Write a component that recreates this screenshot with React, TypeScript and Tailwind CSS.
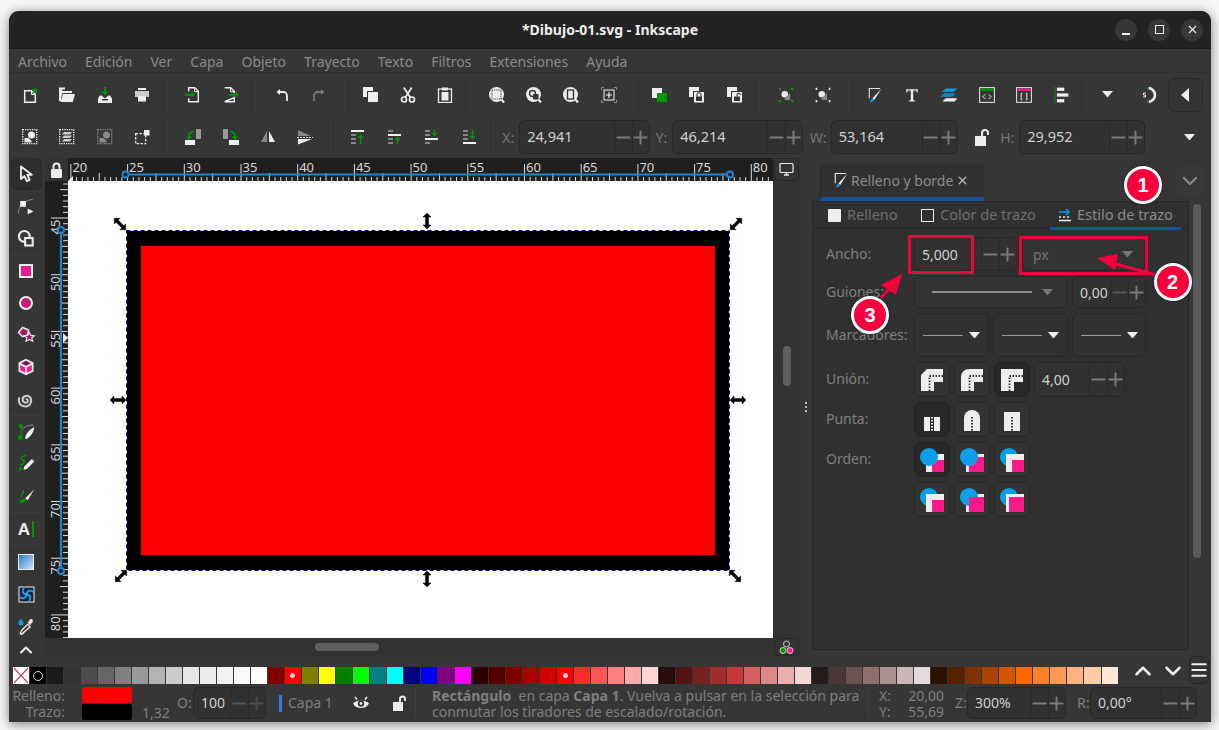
import type { ReactNode } from 'react';
import { ChevronDown, ChevronUp, Minus, Plus, Menu, X } from 'lucide-react';

const W = '#eeeeee';
const G = '#009a00';
const D = '#363636';
const P = '#ff1a8c';
const B = '#0c9ee8';

function I16({ children }: { children: ReactNode }) {
  return (
    <svg width="16" height="16" viewBox="0 0 16 16" fill="none">
      {children}
    </svg>
  );
}

function Svg({ children, size = 18 }: { children: ReactNode; size?: number }) {
  return (
    <svg width={size} height={size} viewBox="0 0 22 22" fill="none">
      {children}
    </svg>
  );
}

function Magnifier({ children }: { children?: ReactNode }) {
  return (
    <I16>
      <circle cx="7.500" cy="7.500" r="7.500" fill={W} />
      <path d="M12 12l3 3.500" stroke={W} strokeWidth="2.200" />
      {children}
    </I16>
  );
}

function LockSquares({ open }: { open?: boolean }) {
  return (
    <I16>
      <rect x="0" y="0" width="10" height="10" fill={W} />
      <rect x="4.500" y="4.500" width="11" height="11.500" fill={W} stroke={D} strokeWidth="1" />
      <rect x="7" y="9.500" width="6" height="4.500" fill={D} />
      <path d={open ? 'M10 9.500V7.800a1.800 1.800 0 0 1 3.500 0' : 'M8 9.500V7.800a2 2 0 0 1 4 0v1.700'} stroke={D} strokeWidth="1.100" />
    </I16>
  );
}

function Dotted({ color = W, children }: { color?: string; children?: ReactNode }) {
  return (
    <I16>
      <rect x="0.700" y="0.700" width="14" height="14" stroke={color} strokeWidth="1.300" strokeDasharray="1.300 1" />
      {children}
    </I16>
  );
}

const row1: ReactNode[][] = [
  [
    <I16 key="new">
      <path d="M2.700 3.700h6.800l3.800 3.800v7.800H2.700z" stroke={W} strokeWidth="1.500" fill={D} />
      <path d="M9.500 3.500v4h4" stroke={W} strokeWidth="1" />
      <path d="M13 0l1 2.200 2.400.3-1.800 1.600.5 2.400-2.100-1.200-2.100 1.200.5-2.400-1.800-1.600 2.400-.3z" fill={G} />
    </I16>,
    <I16 key="open">
      <path d="M0 .5h6v2H3.200V4H13v2H3.500L2 11.500V14H0z" fill={W} />
      <path d="M4 7h12l-2.300 8H1.500z" fill={W} />
    </I16>,
    <I16 key="save">
      <path d="M8 0v6" stroke={G} strokeWidth="2" />
      <path d="M4.500 4.500h7L8 8.500z" fill={G} />
      <path d="M3 8.500h1.500L8 11.500l3.500-3H13l2 3V16H1v-4.500z" fill={W} />
      <rect x="5" y="12" width="6" height="1.400" fill={D} />
    </I16>,
    <I16 key="print">
      <rect x="4" y="1" width="8" height="2" fill={W} />
      <rect x="1" y="4" width="14" height="6" fill="#cccccc" />
      <rect x="4" y="9" width="8" height="5.500" fill={W} />
    </I16>,
  ],
  [
    <I16 key="imp">
      <path d="M3.700 4.500V.7h6l3.600 3.600v10.400H3.700v-3.500" stroke={W} strokeWidth="1.400" />
      <path d="M9.500.7v4h4" stroke={W} strokeWidth="1" />
      <path d="M0 7.700h7" stroke={G} strokeWidth="2" />
      <path d="M6.500 4.500l3.500 3.200-3.500 3.200z" fill={G} />
    </I16>,
    <I16 key="exp">
      <path d="M1.700.7h6l3.600 3.600v2M11.300 10.500v4.200H1.700z" stroke={W} strokeWidth="1.400" />
      <path d="M7.500.7v4h4" stroke={W} strokeWidth="1" />
      <path d="M6 7.700h7" stroke={G} strokeWidth="2" />
      <path d="M12.500 4.500l3.500 3.200-3.500 3.200z" fill={G} />
    </I16>,
  ],
  [
    <I16 key="undo">
      <path d="M6 2L2.500 5 6 8z" fill={W} />
      <path d="M4 5h5.500a3.500 3.500 0 0 1 3.500 3.500V14" stroke={W} strokeWidth="1.800" />
    </I16>,
    <I16 key="redo">
      <path d="M10 2l3.500 3L10 8z" fill="#777777" />
      <path d="M12 5H6.500A3.500 3.500 0 0 0 3 8.500V14" stroke="#777777" strokeWidth="1.800" />
    </I16>,
  ],
  [
    <I16 key="dup">
      <rect x="0" y="0" width="10" height="10" fill={W} />
      <rect x="4.500" y="4.500" width="11" height="11" fill={W} stroke={D} strokeWidth="1" />
    </I16>,
    <I16 key="cut">
      <path d="M3.800 .5l6.500 10M11.700 .5L5.200 10.500" stroke={W} strokeWidth="1.700" />
      <circle cx="4" cy="12.500" r="2.500" stroke={W} strokeWidth="1.700" />
      <circle cx="12" cy="12.500" r="2.500" stroke={W} strokeWidth="1.700" />
    </I16>,
    <I16 key="paste">
      <rect x="1.500" y="2" width="13" height="13.500" stroke={W} strokeWidth="1.300" />
      <rect x="5" y="0.500" width="6" height="3" fill={W} />
      <rect x="4.500" y="5" width="7" height="8.500" fill={W} />
    </I16>,
  ],
  [
    <Magnifier key="z1">
      <rect x="3" y="3" width="9" height="9" stroke={D} strokeWidth="1.200" strokeDasharray="1 .9" />
    </Magnifier>,
    <Magnifier key="z2">
      <circle cx="6.500" cy="6.500" r="3" stroke={D} strokeWidth="1.400" />
      <rect x="7" y="7" width="5.500" height="5.500" fill={D} />
    </Magnifier>,
    <Magnifier key="z3">
      <rect x="4.500" y="3" width="6" height="9" stroke={D} strokeWidth="1.400" />
    </Magnifier>,
    <I16 key="z4">
      <path d="M.5 3V.5H3M13 .5h2.500V3M15.500 13v2.500H13M3 15.500H.5V13" stroke="#8a8a8a" strokeWidth="1" />
      <rect x="3" y="3" width="10" height="10" stroke={W} strokeWidth="1" />
      <path d="M8 5v6M5 8h6" stroke={W} strokeWidth="1.200" />
    </I16>,
  ],
  [
    <I16 key="g">
      <rect x="0" y="1" width="10" height="10" fill={W} />
      <rect x="5" y="6" width="10" height="9" fill={G} />
    </I16>,
    <LockSquares key="l1" />,
    <LockSquares key="l2" open />,
  ],
  [
    <Svg key="s1">
      <path d="M2 2h3v3H2zM17 2h3v3h-3zM2 17h3v3H2zM17 17h3v3h-3z" fill={G} />
      <circle cx="9.500" cy="10" r="4" fill={W} />
      <path d="M11 13l5-4v8H9z" fill="#888" />
    </Svg>,
    <Svg key="s2">
      <path d="M2 2h2v3H2zM18 2h2v3h-2zM2 17h2v3H2zM18 17h2v3h-2z" fill={W} />
      <circle cx="9.500" cy="10" r="4" fill={W} />
      <path d="M11 13l5-4v8H9z" fill="#888" />
    </Svg>,
  ],
  [
    <Svg key="fs">
      <path d="M17 3H4v12" stroke={W} strokeWidth="1.300" />
      <path d="M19 3L8 15l2 2z" fill={W} />
      <path d="M8 15c-2 1-2 3-4 5 3 0 5-1 6-3z" fill={B} />
    </Svg>,
    <Svg key="t">
      <path d="M4 4h14v4h-1l-1-2.500h-3.500V17l2 1v1H7.500v-1l2-1V5.500H6L5 8H4z" fill={W} />
    </Svg>,
    <Svg key="lay">
      <path d="M7 3h14l-4 4H2z" fill={B} />
      <path d="M5 9h14l-4 4H1z" fill={B} opacity="0.8" />
      <path d="M7 15h14l-3 4H3z" fill={W} />
    </Svg>,
    <Svg key="xml">
      <rect x="2" y="2" width="18" height="18" stroke={W} strokeWidth="1.200" />
      <rect x="3" y="3" width="16" height="3" fill={G} />
      <path d="M9 10l-3 3 3 3M13 10l3 3-3 3" stroke={W} strokeWidth="1.200" />
    </Svg>,
    <Svg key="css">
      <rect x="2" y="2" width="18" height="18" stroke={W} strokeWidth="1.200" />
      <rect x="3" y="3" width="16" height="3" fill={P} />
      <path d="M9 9H7.500v8H9M13 9h1.500v8H13" stroke={W} strokeWidth="1.200" />
    </Svg>,
    <Svg key="align">
      <path d="M3.500 1v20" stroke={G} strokeWidth="1.200" />
      <rect x="6" y="2" width="9" height="4" fill={W} />
      <rect x="6" y="9" width="14" height="4" fill={W} />
      <rect x="6" y="16" width="9" height="4" fill={W} />
    </Svg>,
  ],
];

function Flip({ mirror }: { mirror?: boolean }) {
  return (
    <I16>
      <g transform={mirror ? 'matrix(-1 0 0 1 16 0)' : undefined}>
        <rect x="11" y="0" width="5" height="10" fill="#999999" />
        <rect x="0" y="11" width="10" height="5" fill={W} />
        <path d="M9 2.500a5 5 0 0 0-5 5v1" stroke={G} strokeWidth="1.700" />
        <path d="M1 7.500h6l-3 3.500z" fill={G} />
      </g>
    </I16>
  );
}

function AlignBars({ white, gray, arrow }: { white: number; gray: number[]; arrow: ReactNode }) {
  return (
    <I16>
      <rect x="2" y={white} width="13" height="2" fill={W} />
      {gray.map((y) => (
        <rect key={y} x="2" y={y} width="5" height="2" fill="#888888" />
      ))}
      {arrow}
    </I16>
  );
}

const row2: ReactNode[][] = [
  [
    <Dotted key="a1">
      <circle cx="9.500" cy="6" r="3.500" fill={W} />
      <path d="M2.500 9h4l3 3v1.500h-7z" fill={W} />
    </Dotted>,
    <Dotted key="a2">
      <path d="M5 3h8l-2 2.500H3zM5 6.500h8L11 9H3zM5 10h8l-2 2.500H3z" fill="#cccccc" />
    </Dotted>,
    <Dotted key="a3" color="#8a8a8a">
      <circle cx="9.500" cy="6" r="3.500" fill="#8a8a8a" />
      <path d="M2.500 9h4l3 3v1.500h-7z" fill="#8a8a8a" />
    </Dotted>,
    <I16 key="a4">
      <rect x="1.700" y="4.700" width="10" height="10" stroke={W} strokeWidth="1.300" strokeDasharray="2.400 1.400" />
      <rect x="10" y="1" width="5.500" height="5.500" fill={W} />
    </I16>,
  ],
  [
    <Flip key="f1" />,
    <Flip key="f2" mirror />,
    <I16 key="f3">
      <path d="M7 2v11H1z" fill="#888888" />
      <path d="M9 2v11h6z" fill={W} />
    </I16>,
    <I16 key="f4">
      <path d="M1 1l13 6H1z" fill="#888888" />
      <path d="M0 8.500h16" stroke={W} strokeDasharray="2 1" />
      <path d="M1 10h14L1 15.500z" fill={W} />
    </I16>,
  ],
  [
    <AlignBars
      key="v1"
      white={1}
      gray={[5, 9, 13]}
      arrow={
        <>
          <path d="M11.500 15.500V7" stroke={G} strokeWidth="1.600" />
          <path d="M8.500 8.500l3-3.500 3 3.500z" fill={G} />
        </>
      }
    />,
    <AlignBars
      key="v2"
      white={5}
      gray={[1, 9, 13]}
      arrow={
        <>
          <path d="M11.500 15.500V10" stroke={G} strokeWidth="1.600" />
          <path d="M8.500 11l3-3.500 3 3.500z" fill={G} />
        </>
      }
    />,
    <AlignBars
      key="v3"
      white={9}
      gray={[1, 5, 13]}
      arrow={
        <>
          <path d="M11.500 .5V5" stroke={G} strokeWidth="1.600" />
          <path d="M8.500 4l3 3.500 3-3.500z" fill={G} />
        </>
      }
    />,
    <AlignBars
      key="v4"
      white={13}
      gray={[1, 5, 9]}
      arrow={
        <>
          <path d="M11.500 .5V8" stroke={G} strokeWidth="1.600" />
          <path d="M8.500 7l3 3.500 3-3.500z" fill={G} />
        </>
      }
    />,
  ],
];

function ToolBtn({ children }: { children: ReactNode }) {
  return <div className="flex h-[32px] w-[37.33px] shrink-0 items-center justify-center">{children}</div>;
}

function Groups({ groups }: { groups: ReactNode[][] }) {
  return (
    <>
      {groups.map((g, i) => (
        <div key={i} className={`relative flex h-full items-center ${i < groups.length - 1 ? 'mr-[14px]' : ''}`}>
          {g.map((n, j) => (
            <ToolBtn key={j}>{n}</ToolBtn>
          ))}
          <div className="absolute -right-[7px] top-[4px] bottom-[4px] w-px bg-[#3d3d3d]" />
        </div>
      ))}
    </>
  );
}

function Spin({
  value,
  dimMinus,
  dimPlus,
  big,
  className,
}: {
  value: string;
  dimMinus?: boolean;
  dimPlus?: boolean;
  big?: boolean;
  className: string;
}) {
  return (
    <div className={`flex items-stretch rounded-[6px] border border-[#272727] bg-[#313131] ${className}`}>
      <div className={`min-w-0 flex-1 self-center pl-[7px] text-[#d0d0d0] ${big ? 'text-[14.500px]' : 'text-[14px]'}`}>{value}</div>
      <div className="flex w-[17.500px] items-center justify-center border-l border-[#2a2a2a] text-[#7c7c7c]">
        <Minus size={21} strokeWidth={2.200} className={`shrink-0 ${dimMinus ? 'text-[#565656]' : ''}`} />
      </div>
      <div className="flex w-[17.500px] items-center justify-center border-l border-[#2a2a2a] text-[#7c7c7c]">
        <Plus size={21} strokeWidth={2.200} className={`shrink-0 ${dimPlus ? 'text-[#4e4e4e]' : ''}`} />
      </div>
    </div>
  );
}

function Caret({ color = '#eeeeee', w = 11 }: { color?: string; w?: number }) {
  return (
    <svg width={w} height={w * 0.6} viewBox="0 0 14 8.400" preserveAspectRatio="none">
      <path d="M0 0h14L7 8.400z" fill={color} />
    </svg>
  );
}

function Coord({ label, value, w, lw }: { label: string; value: string; w: string; lw: string }) {
  return (
    <>
      <div className={`${lw} text-right text-[14px] text-[#757575]`}>{label}</div>
      <Spin value={value} big className={`ml-[5px] h-[34px] ${w}`} />
    </>
  );
}

const tools: ReactNode[][] = [
  [
    <svg key="sel" width="20" height="20" viewBox="0 0 24 24">
      <path d="M6 3v15l4-3.500 3 6 3.500-1.800-3-5.700H19z" fill="#2e2e2e" stroke={W} strokeWidth="2.200" strokeLinejoin="round" />
    </svg>,
    <svg key="node" width="20" height="20" viewBox="0 0 24 24" fill="none">
      <path d="M3 21c0-8 4-15 17-17" stroke="#999999" strokeWidth="1" />
      <rect x="5" y="6" width="7" height="7" fill={W} />
      <path d="M14 15l7 3.500-7 3.500z" fill={W} />
    </svg>,
    <svg key="tw" width="20" height="20" viewBox="0 0 24 24" fill="none">
      <circle cx="10" cy="10" r="6.500" stroke={W} strokeWidth="2.500" />
      <rect x="11" y="12" width="9" height="9" fill="#363636" stroke={W} strokeWidth="2.500" />
    </svg>,
  ],
  [
    <div key="r" className="h-[14px] w-[14px] border-[2px] border-[#eeeeee] bg-[#ec1a8c]" />,
    <div key="c" className="h-[14px] w-[14px] rounded-full border-[2px] border-[#eeeeee] bg-[#c41f77]" />,
    <svg key="st" width="20" height="20" viewBox="0 0 24 24">
      <path d="M8 3l7 3-1 6-6 2-5-5z" fill="#a01d66" stroke={W} strokeWidth="1.800" />
      <path d="M16 9l2 3.500 4 .5-3 2.500 1 4-4-2-4 2 1-4-3-2.500 4-.5z" fill="#a01d66" stroke={W} strokeWidth="1.400" />
    </svg>,
    <svg key="box" width="20" height="20" viewBox="0 0 24 24">
      <path d="M12 2l9 4.500v11L12 22l-9-4.500v-11z" fill={W} />
      <path d="M12 4.500l6 3-6 3-6-3z" fill="#7a1a55" />
      <path d="M5 9.500l6 3V19l-6-3z" fill={P} />
      <path d="M19 9.500l-6 3V19l6-3z" fill={P} />
    </svg>,
    <svg key="sp" width="20" height="20" viewBox="0 0 24 24" fill="none">
      <path d="M12 13c1-1.500 3 0 2 2-1.500 2.500-6 1.500-6-2.500 0-4 6-6 9-2.500 3 4 0 11-5.500 11C5 21 2 16 4 10" stroke="#cccccc" strokeWidth="2.400" />
    </svg>,
  ],
  [
    <svg key="pen" width="20" height="20" viewBox="0 0 24 24" fill="none">
      <path d="M6 7c1 5 0 7 0 9" stroke={G} strokeWidth="1.500" />
      <circle cx="6" cy="5" r="2.500" fill={G} />
      <rect x="3" y="16" width="5" height="5" fill={G} />
      <path d="M11 19c1-5 4-9 11-13-1 7-4 11-10 15z" fill={W} />
      <path d="M8 9c3-4 8-6 13-5" stroke="#999999" strokeWidth="1" />
    </svg>,
    <svg key="pc" width="20" height="20" viewBox="0 0 24 24" fill="none">
      <path d="M12 2c-6 0-7 4-4 5s3 5-3 6" stroke={G} strokeWidth="1.600" />
      <path d="M10 15l9-9 3 3-9 9-4 1z" fill={W} />
      <path d="M5 15l3 3-5 3z" fill={G} />
    </svg>,
    <svg key="cal" width="20" height="20" viewBox="0 0 24 24" fill="none">
      <path d="M8 5c3 3-3 6-1 9" stroke={G} strokeWidth="1.600" />
      <path d="M11 15l11-11-8 13z" fill={W} />
      <path d="M4 18l6-3 2 3-6 3z" fill={G} />
    </svg>,
  ],
  [
    <div key="a" className="flex items-center gap-[2px]">
      <span className="font-['Liberation_Sans',sans-serif] text-[17px] leading-none font-bold text-[#eeeeee]">A</span>
      <span className="h-[16px] w-[2px] bg-[#009a00]" />
    </div>,
  ],
  [
    <div key="g" className="h-[16px] w-[16px] border border-[#eeeeee] bg-gradient-to-br from-[#1d79c8] to-[#c9e4f9]" />,
    <svg key="m" width="17" height="17" viewBox="0 0 17 17" fill="none">
      <rect x="1" y="1" width="15" height="15" fill="#16263a" stroke={W} strokeWidth="1" />
      <path d="M8.500 8.500C4 8 4 4 6 2M8.500 8.500c.5-4.500 4.500-4.500 6.500-2.500M8.500 8.500c4.500.5 4.500 4.500 2.500 6.500M8.500 8.500c-.5 4.500-4.500 4.500-6.500 2.500" stroke="#27a0ee" strokeWidth="1.800" />
    </svg>,
    <svg key="dr" width="20" height="20" viewBox="0 0 24 24" fill="none">
      <path d="M6 3c2 3 3 4 3 5.500a3 3 0 0 1-6 0C3 7 4 6 6 3z" fill={B} />
      <path d="M11 18l-4 4-2-1 2-4 7-7 3 3z" fill="#363636" stroke={W} strokeWidth="1.600" />
      <path d="M14 8l3-4c2-1 4 1 3 3l-3 4z" fill={W} />
    </svg>,
  ],
];

function LeftTools() {
  return (
    <div className="mr-[2px] flex w-[34px] shrink-0 flex-col items-stretch">
      {tools.map((g, i) => (
        <div key={i} className={`flex flex-col ${i < tools.length - 1 ? 'border-b border-[#3c3c3c]' : ''}`}>
          {g.map((n, j) => (
            <div
              key={j}
              className={`flex h-[32px] items-center justify-center ${i === 0 && j === 0 ? 'mx-[1.500px] rounded-[6px] border border-[#292929] bg-[#2e2e2e]' : ''}`}
            >
              {n}
            </div>
          ))}
        </div>
      ))}
      <div className="flex h-[12px] items-start justify-center overflow-hidden text-[#eeeeee]">
        <ChevronUp size={20} strokeWidth={2.500} className="-mt-[2px]" />
      </div>
    </div>
  );
}

function TopRuler() {
  const ticks = Array.from({ length: 124 }, (_, i) => 2.4 + 5.67 * i);
  return (
    <svg width="705" height="23" className="block bg-[#1f1f1f]">
      {ticks.map((x, i) => {
        const h = i % 10 === 0 ? 17 : i % 5 === 0 ? 8 : 4;
        return <rect key={i} x={x} y={23 - h} width="1" height={h} fill="#dddddd" />;
      })}
      {[20, 25, 30, 35, 40, 45, 50, 55, 60, 65, 70, 75, 80].map((v, i) => (
        <text key={v} x={4.4 + 56.7 * i} y="14" fontSize="13" fill="#d8d8d8" fontFamily="Noto Sans, sans-serif">
          {v}
        </text>
      ))}
      <rect x="57.500" y="15.500" width="604" height="2" fill="#1f86d0" />
      <circle cx="57.500" cy="16.500" r="3" fill="#1f1f1f" stroke="#1f86d0" strokeWidth="2" />
      <circle cx="662" cy="16.500" r="3" fill="#1f1f1f" stroke="#1f86d0" strokeWidth="2" />
      <path d="M0 23l5-5v5z" fill="#eeeeee" />
    </svg>
  );
}

function LeftRuler() {
  const ticks = Array.from({ length: 81 }, (_, i) => 2.5 + 5.67 * i);
  return (
    <svg width="23" height="457" className="block bg-[#1f1f1f]">
      {ticks.map((y, i) => {
        const k = i - 6;
        const w = k % 10 === 0 ? 17 : Math.abs(k) % 5 === 0 ? 8 : 5;
        return <rect key={i} x={23 - w} y={y} width={w} height="1" fill="#dddddd" />;
      })}
      {[45, 50, 55, 60, 65, 70, 75, 80].map((v, i) => (
        <text
          key={v}
          transform={`translate(15 ${38.500 + 56.7 * i}) rotate(-90)`}
          textAnchor="end"
          fontSize="13"
          fill="#d8d8d8"
          fontFamily="Noto Sans, sans-serif"
        >
          {v}
        </text>
      ))}
      <rect x="15" y="49" width="2" height="341" fill="#1f86d0" />
      <circle cx="16" cy="49" r="3" fill="#1f1f1f" stroke="#1f86d0" strokeWidth="2" />
      <circle cx="16" cy="390" r="3" fill="#1f1f1f" stroke="#1f86d0" strokeWidth="2" />
      <path d="M18 152l5 5-5 5z" fill="#eeeeee" />
    </svg>
  );
}

function Handle({ x, y, rot }: { x: number; y: number; rot: number }) {
  return (
    <g transform={`translate(${x} ${y}) rotate(${rot})`}>
      <path d="M-8 0l4-4v2.500h8V-4l4 4-4 4v-2.500h-8V4z" fill="#000" stroke="#000" strokeWidth="0.500" />
    </g>
  );
}

function Canvas() {
  return (
    <div className="relative h-[457px] w-[705px] overflow-hidden bg-white">
      <div className="absolute top-[50px] left-[59px] h-[339px] w-[602px] bg-black px-[14px] py-[15px]">
        <div className="h-full w-full bg-[#ff0000]" />
      </div>
      <svg width="705" height="457" className="absolute inset-0">
        <rect x="58.500" y="49.500" width="603" height="340" fill="none" stroke="#00008b" strokeDasharray="4 3" />
        <Handle x={52} y={43} rot={45} />
        <Handle x={359} y={40} rot={90} />
        <Handle x={668} y={43} rot={-45} />
        <Handle x={50} y={219} rot={0} />
        <Handle x={670} y={219} rot={0} />
        <Handle x={53} y={395} rot={-45} />
        <Handle x={359} y={398} rot={90} />
        <Handle x={667} y={395} rot={45} />
      </svg>
    </div>
  );
}

function Row({ label, children }: { label: string; children: ReactNode }) {
  return (
    <div className="flex items-center">
      <div className="w-[88px] shrink-0 pb-[2px] text-[14px] whitespace-nowrap text-[#808080]">{label}</div>
      <div className="flex gap-[4px]">{children}</div>
    </div>
  );
}

function IconBtn({ children, active }: { children: ReactNode; active?: boolean }) {
  return (
    <div
      className={`flex h-[35px] w-[36px] items-center justify-center rounded-[6px] border border-[#272727] ${active ? 'bg-[#292929]' : 'bg-[#333333]'}`}
    >
      {children}
    </div>
  );
}

function MarkerBox({ w }: { w: string }) {
  return (
    <div className={`flex h-[44px] items-center justify-center gap-[6px] rounded-[6px] border border-[#272727] bg-[#313131] ${w}`}>
      <div className="h-px w-[40px] bg-[#999999]" />
      <Caret w={11} />
    </div>
  );
}

function Join({ d, bg }: { d: string; bg: string }) {
  return (
    <svg width="22" height="22" viewBox="0 0 22 22" fill="none">
      <path d={d} fill={W} />
      <path d="M8.500 22V7H22" stroke={bg} strokeWidth="1.800" strokeDasharray="1.500 1.500" />
    </svg>
  );
}

function Cap({ kind, bg }: { kind: 'butt' | 'round' | 'square'; bg: string }) {
  return (
    <svg width="18" height="22" viewBox="0 0 18 22" fill="none">
      {kind === 'butt' && (
        <>
          <rect x="1" y="8" width="6" height="14" fill={W} />
          <rect x="11" y="8" width="6" height="14" fill={W} />
        </>
      )}
      {kind === 'round' && <path d="M1 22V9a8 8 0 0 1 16 0v13z" fill={W} />}
      {kind === 'square' && <rect x="1" y="3" width="16" height="19" fill={W} />}
      <path d="M9 8v14" stroke={kind === 'butt' ? W : bg} strokeWidth="2" strokeDasharray="1.500 1.500" />
    </svg>
  );
}

// stacking order of the three shapes, bottom first: c circle, w white square, s small pink, b big pink
function Order({ stack }: { stack: string }) {
  return (
    <svg width="24" height="24" viewBox="0 0 24 24">
      {stack.split('').map((k) => {
        if (k === 'c') return <circle key={k} cx="9" cy="9" r="9" fill={B} />;
        if (k === 'w') return <rect key={k} x="6" y="6" width="18" height="18" fill={W} />;
        if (k === 's') return <rect key={k} x="12" y="12" width="12" height="12" fill={P} />;
        return <rect key={k} x="9" y="9" width="15" height="15" fill={P} />;
      })}
    </svg>
  );
}

const swatches = [
  '#1a1a1a', '#333333', '#4d4d4d', '#666666', '#808080', '#999999', '#b3b3b3', '#cccccc', '#e6e6e6', '#ececec', '#f2f2f2', '#f9f9f9', '#ffffff',
  '#800000', 'dot', '#808000', '#ffff00', '#008000', '#00ff00', '#008080', '#00ffff', '#000080', '#0000ff', '#800080', '#ff00ff',
  '#2b0000', '#550000', '#800000', '#aa0000', '#d40000', 'dot', '#ff2a2a', '#ff5555', '#ff8080', '#ffaaaa', '#ffd5d5',
  '#280b0b', '#501616', '#782121', '#a02c2c', '#c83737', '#d35f5f', '#de8787', '#e9afaf', '#f4d7d7',
  '#241c1c', '#483737', '#6c5353', '#916f6f', '#ac9393', '#c8b7b7', '#e3dbdb',
  '#2b1100', '#552200', '#803300', '#aa4400', '#d45500', '#ff6600', '#ff7f2a', '#ff9955', '#ffb380', '#ffccaa', '#ffe6d5',
];

function Palette() {
  return (
    <div className="flex h-[17px] shrink-0 items-stretch pl-[3.500px]">
      <div className="flex w-[1105.500px] gap-px">
        <div className="flex-1 bg-white">
          <svg width="100%" height="100%" viewBox="0 0 16 16" preserveAspectRatio="none">
            <path d="M1 1l14 14M15 1L1 15" stroke="#c8233c" strokeWidth="1" />
          </svg>
        </div>
        <div className="flex flex-1 items-center justify-center bg-black">
          <div className="h-[10px] w-[10px] rounded-full border border-[#dddddd]" />
        </div>
        {swatches.map((c, i) =>
          c === 'dot' ? (
            <div key={i} className="flex flex-1 items-center justify-center bg-[#ff0000]">
              <div className="h-[5px] w-[5px] rounded-full bg-[#ffd0d0]" />
            </div>
          ) : (
            <div key={i} className="flex-1" style={{ backgroundColor: c }} />
          ),
        )}
      </div>
      <div className="-mt-[9px] ml-[12px] flex w-[56px] items-center gap-[4px] text-[#eeeeee]">
        <ChevronUp size={26} strokeWidth={2.300} className="shrink-0" />
        <ChevronDown size={26} strokeWidth={2.300} className="shrink-0" />
      </div>
      <div className="z-10 -mt-[11px] ml-[3px] flex h-[28px] w-[20px] items-center justify-center rounded-[6px] border border-[#272727] bg-[#333333] text-[#eeeeee]">
        <Menu size={20} strokeWidth={2.400} className="shrink-0" />
      </div>
    </div>
  );
}

function StatusBar() {
  return (
    <div className="flex h-[38px] shrink-0 items-center text-[14px] leading-[16px] text-[#808080]">
      <div className="ml-[3px] flex w-[53px] flex-col items-end pt-[2px]">
        <div>Relleno:</div>
        <div>Trazo:</div>
      </div>
      <div className="ml-[17px] flex w-[50px] flex-col gap-px">
        <div className="h-[16px] rounded-[2px] bg-[#ff0000]" />
        <div className="h-[16px] rounded-[2px] bg-black" />
      </div>
      <div className="ml-[10px] w-[27px] self-end pb-[1px]">1,32</div>
      <div className="ml-[8px] w-[14px]">O:</div>
      <Spin value="100" dimMinus dimPlus className="ml-[2px] h-[32px] w-[73px]" />
      <div className="ml-[13px] h-[17px] w-[3px] bg-[#3b78e7]" />
      <div className="ml-[6px] w-[54px] whitespace-nowrap">Capa 1</div>
      <div className="ml-[10px]">
        <svg width="18" height="18" viewBox="0 0 18 18" fill="none">
          <path d="M1 9.500c3-4 13-4 16 0-3 6-13 6-16 0z" fill={W} />
          <circle cx="9" cy="9.500" r="3.200" fill="#333333" />
          <circle cx="9" cy="9.500" r="1.400" fill={W} />
          <path d="M3 3l2 2.500M15 3l-2 2.500" stroke={W} strokeWidth="1.600" />
        </svg>
      </div>
      <div className="ml-[21px]">
        <svg width="16" height="18" viewBox="0 0 16 18" fill="none">
          <rect x="2" y="8" width="10" height="9" fill={W} />
          <path d="M9 8V5a2.500 2.500 0 0 1 5 0v2" stroke={W} strokeWidth="1.800" />
        </svg>
      </div>
      <div className="mr-[16px] ml-[8px] h-[32px] w-px bg-[#3e3e3e]" />
      <div className="w-[436px] whitespace-nowrap pt-[2px]">
        <div>
          <b className="font-bold">Rectángulo</b> &nbsp;en capa <b className="font-bold">Capa 1</b>. Vuelva a pulsar en la selección para
        </div>
        <div>conmutar los tiradores de escalado/rotación.</div>
      </div>
      <div className="h-[32px] w-px bg-[#3e3e3e]" />
      <div className="ml-[10px] flex w-[65px] flex-col pt-[2px]">
        <div className="flex justify-between">
          <span>X:</span>
          <span>20,00</span>
        </div>
        <div className="flex justify-between">
          <span>Y:</span>
          <span>55,69</span>
        </div>
      </div>
      <div className="ml-[11px] w-[12px]">Z:</div>
      <Spin value="300%" className="ml-0 h-[32px] w-[99px]" />
      <div className="ml-[11px] w-[12px]">R:</div>
      <Spin value="0,00°" className="ml-[1px] h-[32px] w-[107px]" />
    </div>
  );
}

function Badge({ n, className }: { n: number; className: string }) {
  return (
    <div
      className={`absolute flex h-[38px] w-[38px] items-center justify-center rounded-full border-[3px] border-white bg-[#f5003d] font-['Liberation_Sans',sans-serif] text-[20px] font-bold text-white outline-[1px] outline-offset-0 outline-[#222222] outline-dotted ${className}`}
    >
      {n}
    </div>
  );
}

function Annotations() {
  return (
    <>
      <div className="absolute top-[224px] left-[899px] h-[39px] w-[66px] border-[3px] border-[#e8043f]" />
      <div className="absolute top-[225px] left-[1010px] h-[39px] w-[129px] border-[3px] border-[#e8043f]" />
      <svg width="1219" height="730" className="pointer-events-none absolute top-[-11px] left-[-9px]">
        <path d="M1156 275L1112 263" stroke="#f5003d" strokeWidth="3" />
        <path d="M1097 258L1118 254L1115 270z" fill="#f5003d" />
        <path d="M881 298l9-10" stroke="#f5003d" strokeWidth="3" />
        <path d="M902 274L881 285L896 295z" fill="#f5003d" />
      </svg>
      <Badge n={1} className="top-[155px] left-[1115px]" />
      <Badge n={2} className="top-[252px] left-[1144.500px]" />
      <Badge n={3} className="top-[285px] left-[842px]" />
    </>
  );
}

function Panel() {
  return (
    <div className="flex w-[393px] shrink-0 flex-col">
      <div className="flex h-[43px] shrink-0 items-start justify-between pl-[8px]">
        <div className="mt-[5px] flex h-[38px] w-[164px] items-center gap-[1px] border-b-[4px] border-l border-[#15539e] border-l-[#2a2a2a] bg-[#303030] pl-[11px]">
          <svg width="18" height="18" viewBox="0 0 22 22" fill="none">
            <path d="M17 3H4v12" stroke={W} strokeWidth="1.300" />
            <path d="M19 3L8 15l2 2z" fill={W} />
            <path d="M8 15c-2 1-2 3-4 5 3 0 5-1 6-3z" fill={B} />
          </svg>
          <span className="text-[14px] whitespace-nowrap text-[#8c8c8c]">Relleno y borde</span>
          <X size={13} strokeWidth={3} className="ml-[2px] text-[#aaaaaa]" />
        </div>
        <div className="mt-[7px] flex h-[31px] w-[31px] items-center justify-center rounded-[6px] bg-[#383838] text-[#8a8a8a]">
          <ChevronDown size={24} strokeWidth={2.200} />
        </div>
      </div>
      <div className="flex h-[449px] items-start">
        <div className="h-full w-[377px] border border-[#272727] bg-[#303030]">
          <div className="flex h-[27px] border-b border-[#272727] text-[14.500px] text-[#6f6f6f]">
            <div className="ml-[15px] flex w-[93px] items-center gap-[6px]">
              <div className="h-[13px] w-[13px] rounded-[1px] bg-[#eeeeee]" />
              Relleno
            </div>
            <div className="flex w-[129px] items-center gap-[6px]">
              <div className="h-[13px] w-[13px] border-[1.500px] border-[#eeeeee]" />
              Color de trazo
            </div>
            <div className="flex h-[28px] w-[131px] items-center gap-[5px] border-b-[3px] border-[#15539e] pl-[8px] whitespace-nowrap text-[#8c8c8c]">
              <svg width="14" height="14" viewBox="0 0 14 14" fill="none">
                <path d="M1 4h9M8 1l3 3-3 3" stroke={B} strokeWidth="1.500" />
                <path d="M1 9h2M5 9h2M9 9h2M1 12.500h12" stroke={W} strokeWidth="1.300" />
              </svg>
              Estilo de trazo
            </div>
          </div>
          <div className="flex flex-col gap-[5px] pt-[8px] pl-[13px]">
            <Row label="Ancho:">
              <div className="flex gap-[5px]">
                <Spin value="5,000" className="h-[34px] w-[103px]" />
                <div className="flex h-[34px] w-[123px] items-center justify-between rounded-[6px] border border-[#272727] bg-[#333333] pr-[11px] pl-[10px] text-[14px] text-[#777777]">
                  px
                  <Caret color="#777777" w={11} />
                </div>
              </div>
            </Row>
            <Row label="Guiones:">
              <div className="flex h-[32px] w-[153px] items-center justify-between rounded-[6px] border border-[#272727] bg-[#333333] pr-[13px] pl-[17px]">
                <div className="h-[2px] w-[100px] bg-[#8f8f8f]" />
                <Caret color="#777777" w={11} />
              </div>
              <div className="ml-px">
                <Spin value="0,00" dimMinus className="h-[32px] w-[74px]" />
              </div>
            </Row>
            <Row label="Marcadores:">
              <MarkerBox w="w-[75px]" />
              <MarkerBox w="w-[75px]" />
              <MarkerBox w="w-[74px]" />
            </Row>
            <Row label="Unión:">
              <IconBtn>
                <Join bg="#333333" d="M6 0h16v13h-9v9H0V6z" />
              </IconBtn>
              <IconBtn>
                <Join bg="#333333" d="M8 0h14v13h-9v9H0V8a8 8 0 0 1 8-8z" />
              </IconBtn>
              <IconBtn active>
                <Join bg="#292929" d="M0 0h22v13h-9v9H0z" />
              </IconBtn>
              <Spin value="4,00" className="h-[35px] w-[91px]" />
            </Row>
            <Row label="Punta:">
              <IconBtn active>
                <Cap kind="butt" bg="#292929" />
              </IconBtn>
              <IconBtn>
                <Cap kind="round" bg="#333333" />
              </IconBtn>
              <IconBtn>
                <Cap kind="square" bg="#333333" />
              </IconBtn>
            </Row>
            <Row label="Orden:">
              <IconBtn active>
                <Order stack="wsc" />
              </IconBtn>
              <IconBtn>
                <Order stack="wbc" />
              </IconBtn>
              <IconBtn>
                <Order stack="cws" />
              </IconBtn>
            </Row>
            <Row label="">
              <IconBtn>
                <Order stack="cws" />
              </IconBtn>
              <IconBtn>
                <Order stack="wcb" />
              </IconBtn>
              <IconBtn>
                <Order stack="cwb" />
              </IconBtn>
            </Row>
          </div>
        </div>
        <div className="mt-[3px] ml-[4px] h-[354px] w-[8px] rounded-full bg-[#5b5b5b]" />
      </div>
    </div>
  );
}

const menus = ['Archivo', 'Edición', 'Ver', 'Capa', 'Objeto', 'Trayecto', 'Texto', 'Filtros', 'Extensiones', 'Ayuda'];

export default function App() {
  return (
    <div className="h-[730px] w-[1219px] overflow-hidden bg-[#f6f6f6] pt-[11px] pl-[9px] font-['Noto_Sans',sans-serif]">
      <div className="relative flex h-[711px] w-[1202px] flex-col rounded-t-[10px] bg-[#363636] shadow-[0_2px_12px_rgba(0,0,0,0.5)]">
        {/* Title bar */}
        <div className="relative flex h-[38px] shrink-0 items-center justify-center rounded-t-[10px] border-b border-[#1a1a1a] bg-[#232323]">
          <div className="text-[14px] font-bold text-[#eeeeee]">*Dibujo-01.svg - Inkscape</div>
          <div className="absolute right-[8px] flex gap-[11px] text-[#eeeeee]">
            <div className="flex h-[22px] w-[22px] items-end justify-center rounded-full bg-[#373737] pb-[6px]">
              <div className="h-[1.500px] w-[8px] bg-[#eeeeee]" />
            </div>
            <div className="flex h-[22px] w-[22px] items-center justify-center rounded-full bg-[#373737]">
              <div className="h-[9px] w-[9px] border border-[#eeeeee]" />
            </div>
            <div className="flex h-[22px] w-[22px] items-center justify-center rounded-full bg-[#373737]">
              <X size={13} strokeWidth={2} />
            </div>
          </div>
        </div>

        {/* Menu */}
        <div className="flex h-[24px] shrink-0 items-center gap-[18px] border-b border-[#2f2f2f] pt-[2px] pl-[9px] text-[14px] text-[#8c8c8c]">
          {menus.map((m) => (
            <div key={m}>{m}</div>
          ))}
        </div>

        {/* Commands */}
        <div className="flex h-[43px] shrink-0 items-center pl-[2.300px]">
          <Groups groups={row1} />
          <div className="ml-[22px] flex">
            <Caret w={11} />
          </div>
          <div className="ml-[26px]">
            <svg width="22" height="22" viewBox="0 0 22 22" fill="none">
              <path d="M9 4a7 7 0 1 1 0 14" stroke={W} strokeWidth="2.600" />
              <path d="M8 3h2v2H8zM8 17h2v2H8z" fill={G} />
              <path d="M7 9H4.500v2h2v2H4" stroke={W} strokeWidth="1" />
            </svg>
          </div>
          <div className="ml-[7px] flex h-[34px] w-[35px] items-center justify-center rounded-[6px] border border-[#272727] bg-[#333333]">
            <svg width="8" height="14" viewBox="0 0 8 14">
              <path d="M8 0v14L0 7z" fill={W} />
            </svg>
          </div>
        </div>

        {/* Selection bar */}
        <div className="flex h-[42px] shrink-0 items-center pl-[2.300px]">
          <Groups groups={row2} />
          <div className="flex items-center pl-[14px]">
            <Coord label="X:" value="24,941" w="w-[131px]" lw="w-[13px]" />
            <div className="ml-[4px] flex items-center">
              <Coord label="Y:" value="46,214" w="w-[131px]" lw="w-[13px]" />
            </div>
            <div className="ml-[6.500px] flex items-center">
              <Coord label="W:" value="53,164" w="w-[127px]" lw="w-[16px]" />
            </div>
            <div className="ml-[16px]">
              <svg width="17" height="19" viewBox="0 0 17 19" fill="none">
                <rect x="1" y="8" width="11" height="10" fill={W} />
                <path d="M8 8V5a3 3 0 0 1 6 0v2" stroke={W} strokeWidth="2" />
              </svg>
            </div>
            <div className="ml-[9.500px] flex items-center">
              <Coord label="H:" value="29,952" w="w-[126px]" lw="w-[14px]" />
            </div>
            <div className="ml-[39px] flex">
              <Caret w={11} />
            </div>
          </div>
        </div>

        {/* Main area */}
        <div className="flex h-[509px] shrink-0 items-start">
          <LeftTools />
          <div className="flex w-[728px] shrink-0 flex-col">
            <div className="flex h-[23px]">
              <div className="flex w-[23px] items-center justify-center bg-[#333333]">
                <svg width="13" height="16" viewBox="0 0 13 16" fill="none">
                  <rect x="1" y="7" width="11" height="9" rx="1" fill={W} />
                  <path d="M3.500 7V4.500a3 3 0 0 1 6 0V7" stroke={W} strokeWidth="2" />
                </svg>
              </div>
              <TopRuler />
            </div>
            <div className="flex">
              <LeftRuler />
              <Canvas />
            </div>
            <div className="flex h-[18px] items-center justify-start bg-[#323232] pl-[270px]">
              <div className="h-[8px] w-[64px] rounded-full bg-[#5f5f5f]" />
            </div>
          </div>
          <div className="flex h-[498px] w-[27px] shrink-0 flex-col items-center bg-[#323232]">
            <div className="flex h-[23px] w-[25px] items-center justify-center rounded-[5px] border border-[#272727] bg-[#333333]">
              <svg width="15" height="15" viewBox="0 0 15 15" fill="none">
                <rect x="1" y="1.500" width="13" height="9" rx="1" stroke={W} strokeWidth="1.200" />
                <path d="M5 13h5M7.500 11v2" stroke={W} strokeWidth="1.500" />
              </svg>
            </div>
            <div className="mt-[165px] h-[40px] w-[8px] rounded-full bg-[#5f5f5f]" />
            <div className="mt-auto flex h-[18px] w-[25px] items-center justify-center rounded-[5px] border border-[#272727] bg-[#333333]">
              <svg width="17" height="17" viewBox="0 0 17 17" fill="none">
                <circle cx="8.500" cy="5" r="3" stroke={W} strokeWidth="0.800" />
                <circle cx="5" cy="11.500" r="3" fill={G} stroke={W} strokeWidth="0.800" />
                <circle cx="12" cy="11.500" r="3" fill={P} stroke={W} strokeWidth="0.800" />
              </svg>
            </div>
          </div>
          <div className="flex h-[498px] w-[12px] shrink-0 items-center justify-center">
            <div className="flex flex-col gap-[1.500px]">
              <div className="h-[2.500px] w-[2.500px] rounded-full bg-[#eeeeee]" />
              <div className="h-[2.500px] w-[2.500px] rounded-full bg-[#eeeeee]" />
              <div className="h-[2.500px] w-[2.500px] rounded-full bg-[#eeeeee]" />
            </div>
          </div>
          <Panel />
        </div>

        <Palette />
        <StatusBar />
        <Annotations />
      </div>
    </div>
  );
}
